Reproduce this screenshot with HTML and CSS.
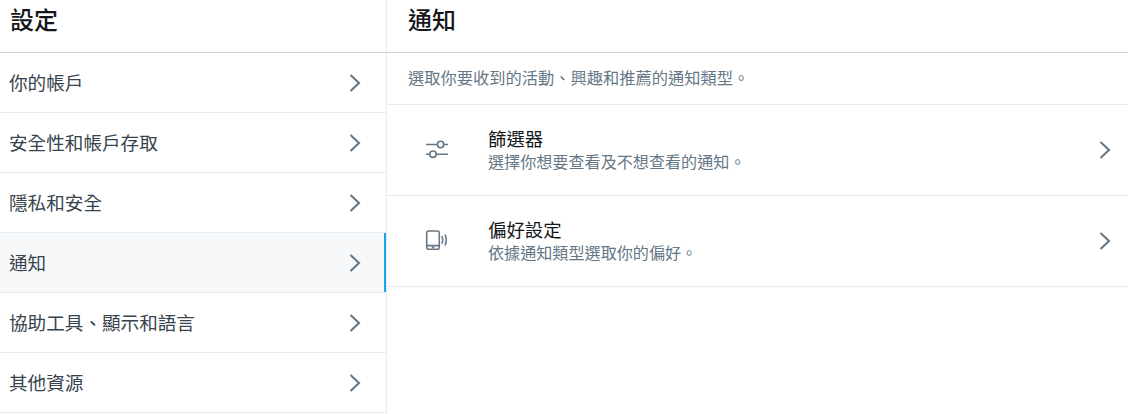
FILE: index.html
```html
<!DOCTYPE html>
<html lang="zh-TW">
<head>
    <meta charset="UTF-8">
    <meta name="viewport" content="width=device-width, initial-scale=1.0">
    <title>通知</title>
    <link rel="stylesheet" href="styles.css">
</head>
<body>
    <div class="layout">
        <aside class="sidebar">
            <h2 class="sidebar-title">設定</h2>
            <a class="side-row" href="#"><span>你的帳戶</span><svg class="chevron" viewBox="0 0 24 24"><path d="M7.5 4 16 12l-8.500 8"/></svg></a>
            <a class="side-row" href="#"><span>安全性和帳戶存取</span><svg class="chevron" viewBox="0 0 24 24"><path d="M7.5 4 16 12l-8.500 8"/></svg></a>
            <a class="side-row" href="#"><span>隱私和安全</span><svg class="chevron" viewBox="0 0 24 24"><path d="M7.5 4 16 12l-8.500 8"/></svg></a>
            <a class="side-row active" href="#"><span>通知</span><svg class="chevron" viewBox="0 0 24 24"><path d="M7.5 4 16 12l-8.500 8"/></svg></a>
            <a class="side-row" href="#"><span>協助工具、顯示和語言</span><svg class="chevron" viewBox="0 0 24 24"><path d="M7.5 4 16 12l-8.500 8"/></svg></a>
            <a class="side-row" href="#"><span>其他資源</span><svg class="chevron" viewBox="0 0 24 24"><path d="M7.5 4 16 12l-8.500 8"/></svg></a>
        </aside>
        <main class="content">
            <h2 class="content-title">通知</h2>
            <p class="intro">選取你要收到的活動、興趣和推薦的通知類型。</p>
            <a class="option" href="#">
                <svg class="option-icon" viewBox="0 0 24 24">
                    <path d="M1 6.500h11.400M18.800 6.500H23M1 16.200h3.800M11.200 16.200H23"/>
                    <circle cx="15.600" cy="6.500" r="3.200"/>
                    <circle cx="8" cy="16.200" r="3.200"/>
                </svg>
                <div class="option-text">
                    <div class="option-name">篩選器</div>
                    <div class="option-desc">選擇你想要查看及不想查看的通知。</div>
                </div>
                <svg class="chevron" viewBox="0 0 24 24"><path d="M7.5 4 16 12l-8.500 8"/></svg>
            </a>
            <a class="option" href="#">
                <svg class="option-icon" viewBox="0 0 24 24">
                    <rect x="1.700" y="2" width="12.600" height="18.300" rx="2"/>
                    <path d="M1.700 16.600h12.600M6.800 18.500h2.400"/>
                    <path d="M17 7c1.100 2.600 1.100 5.200 0 7.800M20 5.500c1.700 3.600 1.700 7.400 0 11"/>
                </svg>
                <div class="option-text">
                    <div class="option-name">偏好設定</div>
                    <div class="option-desc">依據通知類型選取你的偏好。</div>
                </div>
                <svg class="chevron" viewBox="0 0 24 24"><path d="M7.5 4 16 12l-8.500 8"/></svg>
            </a>
        </main>
    </div>
</body>
</html>
```

FILE: styles.css
```css
* {
    margin: 0;
    padding: 0;
    box-sizing: border-box;
}

body {
    font-family: "Liberation Sans", "Noto Sans CJK TC", sans-serif;
    color: #14171a;
    background-color: #fff;
    overflow: hidden;
}

a {
    color: inherit;
    text-decoration: none;
}

.layout {
    display: flex;
    height: 414px;
}

.sidebar {
    width: 387px;
    flex-shrink: 0;
    border-right: 1px solid #e6ecf0;
}

.sidebar-title,
.content-title {
    height: 53px;
    font-size: 24px;
    font-weight: 500;
    line-height: 42px;
    color: #14171a;
    border-bottom: 1px solid #c4cfd6;
}

.sidebar-title {
    padding-left: 10px;
}

.content-title {
    padding-left: 21px;
}

.side-row {
    display: flex;
    align-items: center;
    justify-content: space-between;
    height: 60px;
    padding: 0 19px 2px 9px;
    font-size: 18.6px;
    color: #38444d;
    border-bottom: 1px solid #e6ecf0;
}

.side-row .chevron {
    margin-top: 2px;
}

.side-row.active {
    background-color: #f6f8fa;
    box-shadow: inset -2px 0 0 #1da1f2;
}

.chevron {
    width: 24px;
    height: 24px;
    flex-shrink: 0;
    fill: none;
    stroke: #657786;
    stroke-width: 2.1;
}

.content {
    flex: 1;
}

.intro {
    height: 52px;
    padding: 15px 21px 0;
    font-size: 16.25px;
    line-height: 20px;
    color: #657786;
    border-bottom: 1px solid #e6ecf0;
}

.option {
    display: flex;
    align-items: center;
    height: 91px;
    padding: 0 11px 0 38px;
    border-bottom: 1px solid #e6ecf0;
}

.option-icon {
    width: 24px;
    height: 24px;
    flex-shrink: 0;
    margin-right: 39px;
    fill: none;
    stroke: #657786;
    stroke-width: 1.6;
}

.option-text {
    flex: 1;
    padding-top: 2px;
}

.option-name {
    font-size: 18.4px;
    line-height: 20px;
    color: #14171a;
}

.option-desc {
    margin-top: 2px;
    font-size: 16.1px;
    line-height: 20px;
    color: #657786;
}
```
